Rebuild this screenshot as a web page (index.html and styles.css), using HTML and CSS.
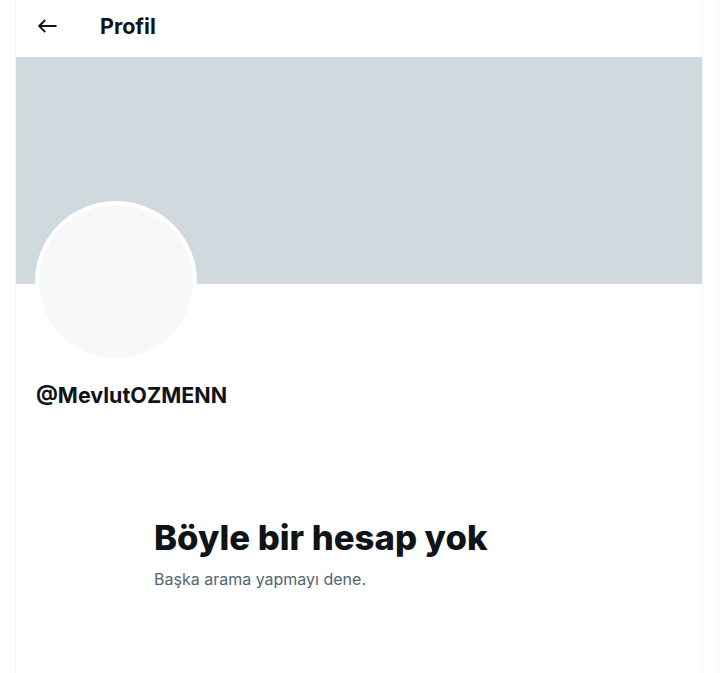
FILE: index.html
```html
<!DOCTYPE html>
<html lang="tr">
<head>
<meta charset="utf-8">
<title>Profil</title>
<link rel="stylesheet" href="styles.css">
</head>
<body>
<div class="page">
  <main class="column">
    <header class="topbar">
      <span class="back">
        <svg viewBox="0 0 20 14" width="20" height="14"><path d="M19.5 7H2.2M8.2 1L2.2 7l6 6" fill="none" stroke="#0f1419" stroke-width="1.9"/></svg>
      </span>
      <h1 class="title">Profil</h1>
    </header>
    <div class="banner"></div>
    <section class="profile">
      <div class="avatar"></div>
      <div class="handle">@MevlutOZMENN</div>
    </section>
    <section class="empty">
      <h2 class="empty-title">Böyle bir hesap yok</h2>
      <p class="empty-text">Başka arama yapmayı dene.</p>
    </section>
  </main>
  <aside class="side"></aside>
</div>
</body>
</html>
```
FILE: styles.css
```css
* { box-sizing: border-box; }
html, body { margin: 0; padding: 0; background: #fff; }
body {
  font-family: Inter, "Liberation Sans", Arial, sans-serif;
  color: #0f1419;
  height: 673px;
  overflow: hidden;
}
.page {
  display: flex;
  padding-left: 15px;
  height: 673px;
}
.column {
  width: 688px;
  border-left: 1px solid #f4f6f7;
  border-right: 1px solid #eff3f4;
  height: 673px;
}
.side {
  margin-left: 15px;
  width: 8px;
  border-left: 1px solid #f3f5f6;
}
.topbar {
  height: 57px;
  display: flex;
  align-items: center;
  padding-left: 21px;
}
.back { display: flex; width: 20px; height: 14px; margin-top: -5px; }
.title {
  margin: -6px 0 0 43px;
  font-size: 21.5px;
  font-weight: 700;
  line-height: 26px;
}
.banner {
  height: 227px;
  background: #cfd9de;
}
.profile {
  padding-left: 19px;
}
.avatar {
  width: 162px;
  height: 161px;
  margin-top: -83px;
  border-radius: 50%;
  background: #f7f9f9;
  border: 4px solid #fff;
}
.handle {
  margin-top: 20px;
  margin-left: 1px;
  font-size: 21.5px;
  font-weight: 700;
  line-height: 26px;
}
.empty {
  padding-left: 138px;
  margin-top: 108px;
}
.empty-title {
  margin: 0;
  font-size: 34.7px;
  font-weight: 800;
  line-height: 42px;
}
.empty-text {
  margin: 11px 0 0;
  font-size: 16px;
  line-height: 20px;
  color: #536471;
}
```
